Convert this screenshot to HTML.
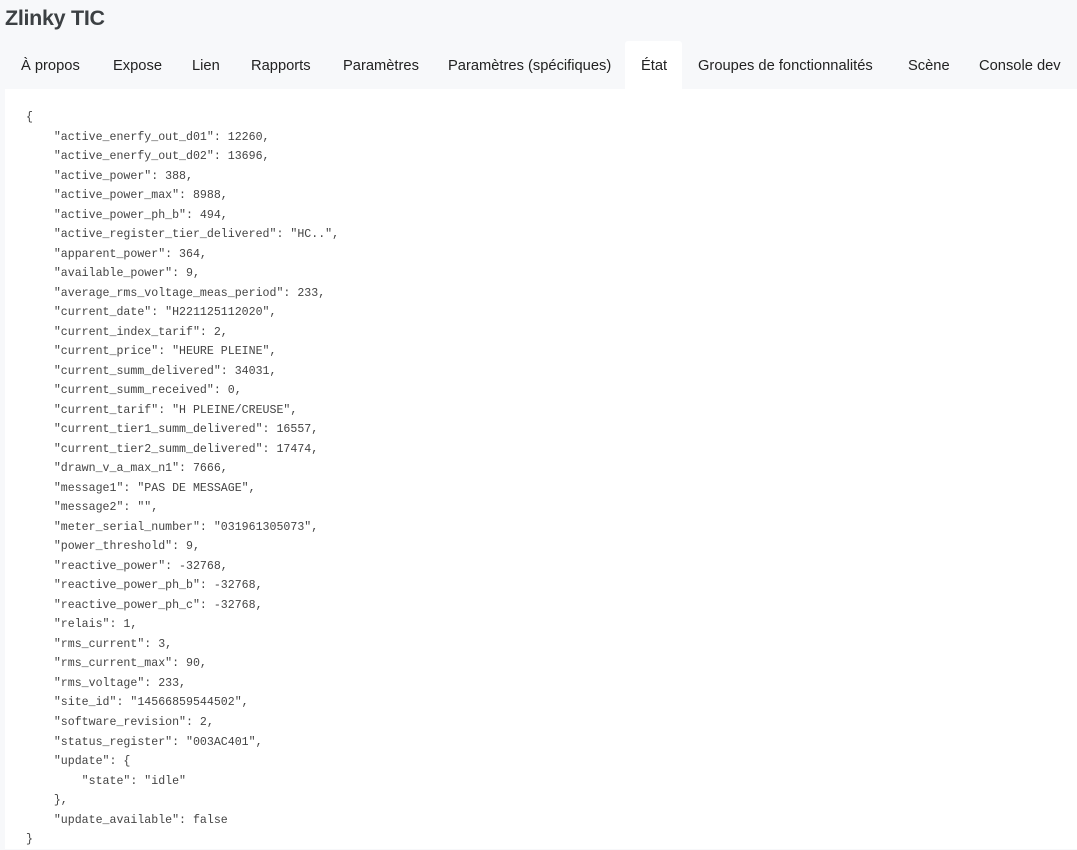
<!DOCTYPE html>
<html><head><meta charset="utf-8"><style>
body{margin:0;width:1077px;height:849px;overflow:hidden;background:#f7f8fa;font-family:"Liberation Sans",sans-serif;position:relative}
h1{position:absolute;left:5px;top:6px;margin:0;font-size:21.5px;font-weight:600;color:#3c4043;letter-spacing:-0.3px}
.tab{position:absolute;top:58px;font-size:14.7px;color:#222;white-space:nowrap}
.active{position:absolute;left:625px;top:41px;width:57px;height:48px;background:#fff;border-radius:3px 3px 0 0}
.content{position:absolute;left:5px;top:89px;width:1072px;height:760px;background:#fff}
pre{position:absolute;left:26px;top:108px;margin:0;font-family:"Liberation Mono",monospace;font-size:11.6px;line-height:19.51px;color:#444}
</style></head><body>
<h1>Zlinky TIC</h1>
<div class="active"></div>
<div class="tab" style="left:21px">À propos</div>
<div class="tab" style="left:113px">Expose</div>
<div class="tab" style="left:192px">Lien</div>
<div class="tab" style="left:251px">Rapports</div>
<div class="tab" style="left:343px">Paramètres</div>
<div class="tab" style="left:448px">Paramètres (spécifiques)</div>
<div class="tab" style="left:641px">État</div>
<div class="tab" style="left:698px">Groupes de fonctionnalités</div>
<div class="tab" style="left:908px">Scène</div>
<div class="tab" style="left:979px">Console dev</div>
<div class="content"></div>
<pre>{
    "active_enerfy_out_d01": 12260,
    "active_enerfy_out_d02": 13696,
    "active_power": 388,
    "active_power_max": 8988,
    "active_power_ph_b": 494,
    "active_register_tier_delivered": "HC..",
    "apparent_power": 364,
    "available_power": 9,
    "average_rms_voltage_meas_period": 233,
    "current_date": "H221125112020",
    "current_index_tarif": 2,
    "current_price": "HEURE PLEINE",
    "current_summ_delivered": 34031,
    "current_summ_received": 0,
    "current_tarif": "H PLEINE/CREUSE",
    "current_tier1_summ_delivered": 16557,
    "current_tier2_summ_delivered": 17474,
    "drawn_v_a_max_n1": 7666,
    "message1": "PAS DE MESSAGE",
    "message2": "",
    "meter_serial_number": "031961305073",
    "power_threshold": 9,
    "reactive_power": -32768,
    "reactive_power_ph_b": -32768,
    "reactive_power_ph_c": -32768,
    "relais": 1,
    "rms_current": 3,
    "rms_current_max": 90,
    "rms_voltage": 233,
    "site_id": "14566859544502",
    "software_revision": 2,
    "status_register": "003AC401",
    "update": {
        "state": "idle"
    },
    "update_available": false
}</pre>
</body></html>
